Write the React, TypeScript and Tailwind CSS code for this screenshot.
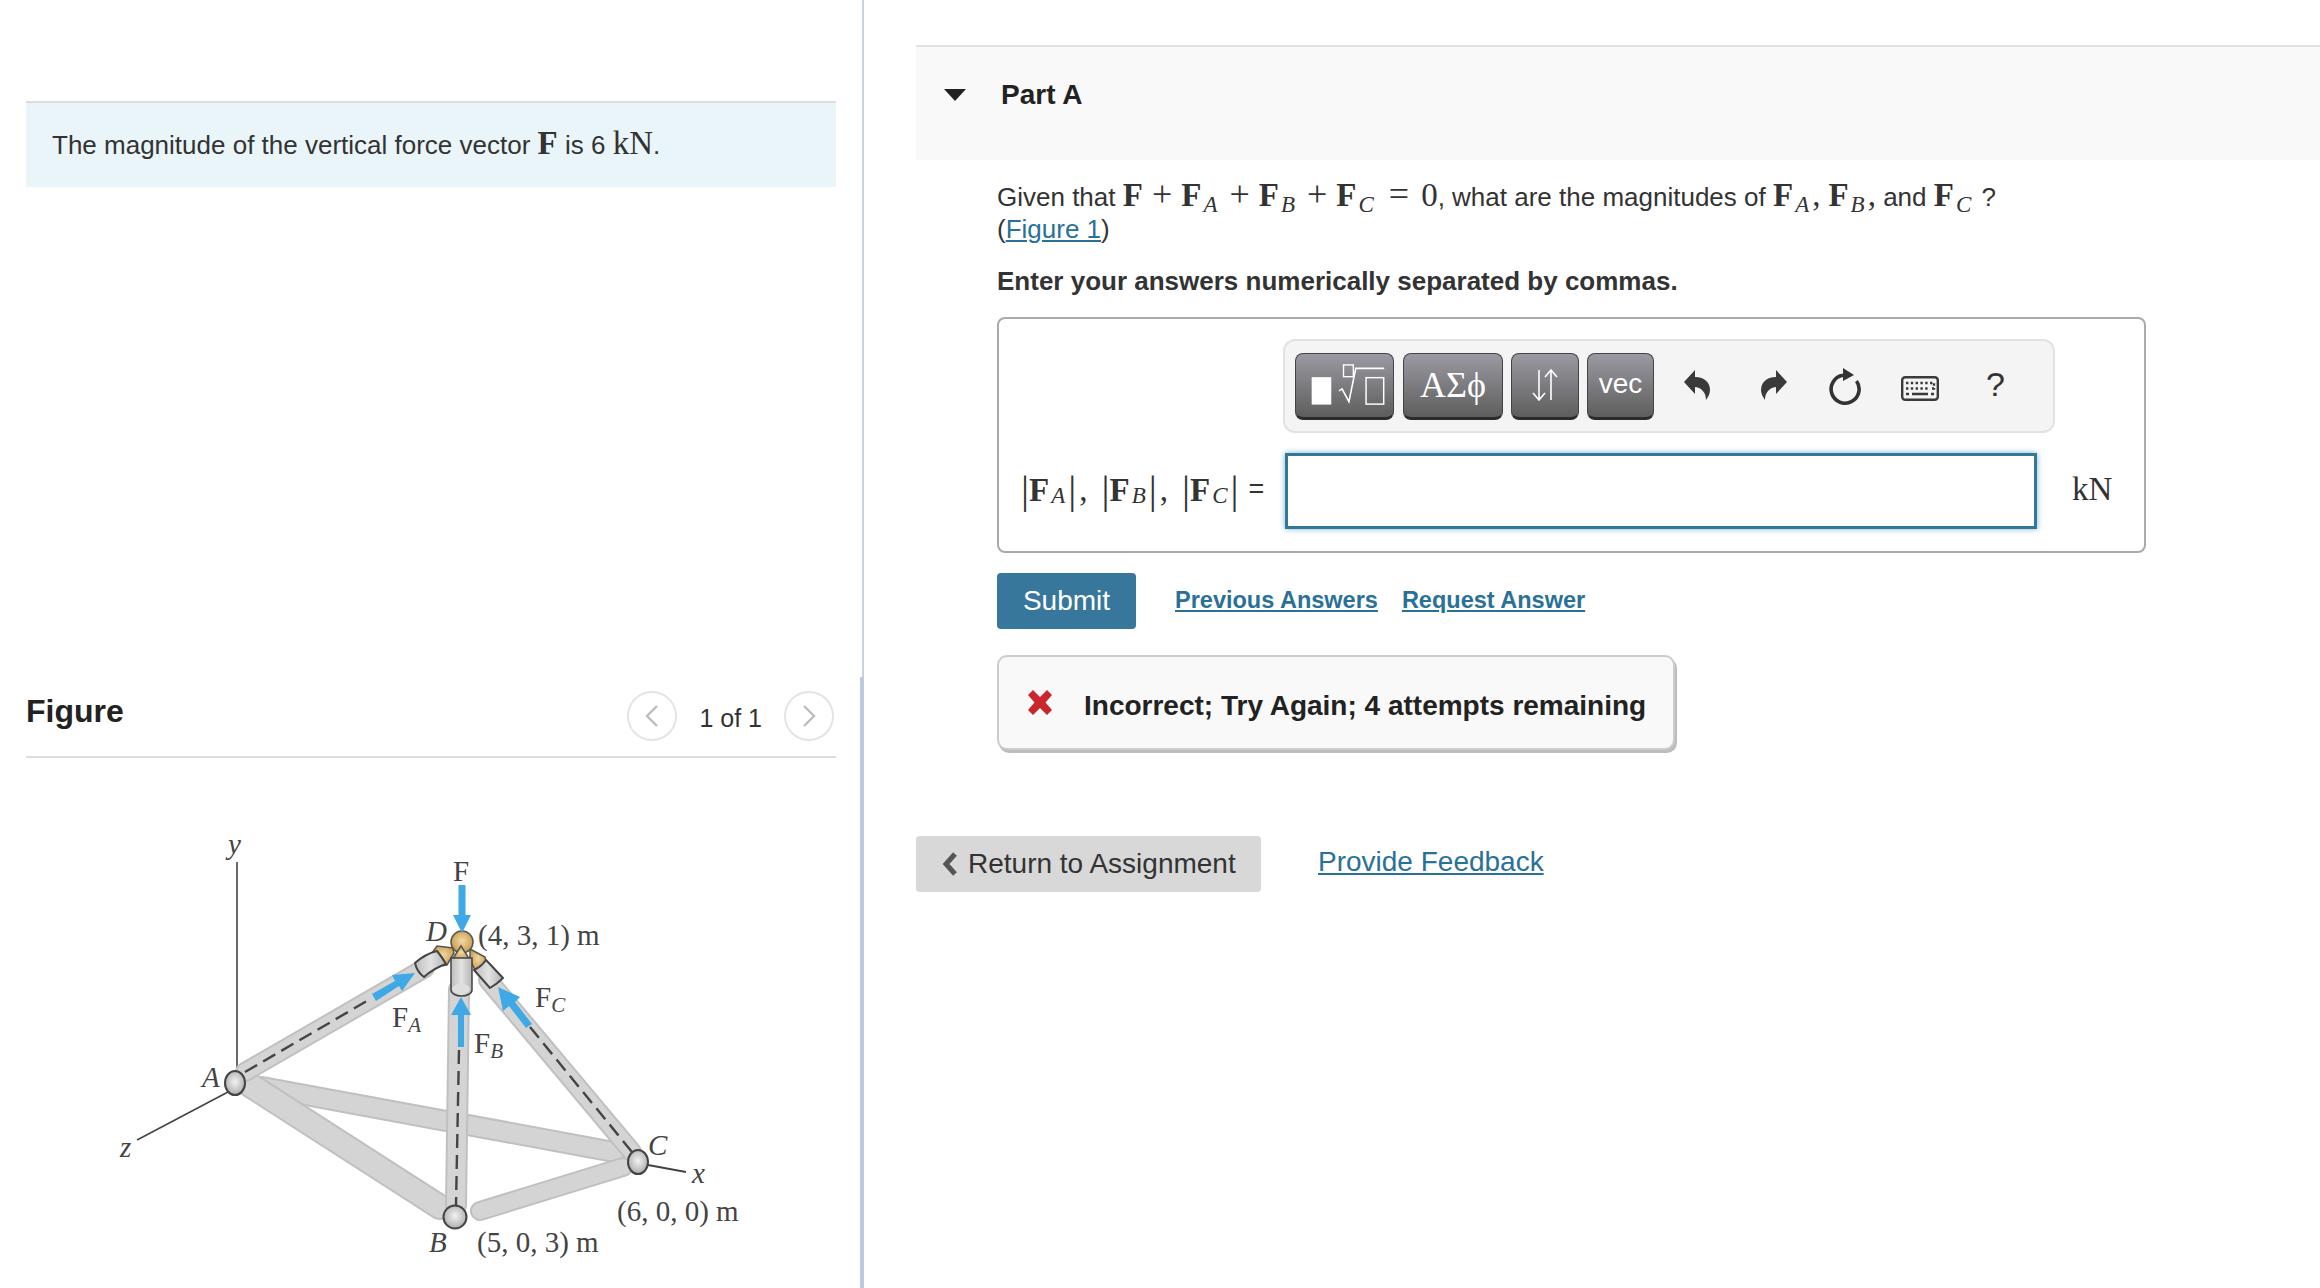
import type { ReactNode } from 'react'

const serif = 'font-["Liberation_Serif",serif]'

function MathBold({ children }: { children: ReactNode }) {
  return <span className={`${serif} font-bold text-[33px] leading-[0]`}>{children}</span>
}

function Sub({ children }: { children: ReactNode }) {
  return <span className={`${serif} relative top-[6px] ml-[2px] mr-[3px] italic font-normal text-[23px] leading-[0]`}>{children}</span>
}

function Op({ children, className = 'mx-[9px]' }: { children: ReactNode; className?: string }) {
  return <span className={`${serif} text-[36px] leading-[0] ${className}`}>{children}</span>
}

function Comma({ className = '' }: { className?: string }) {
  return <span className={`${serif} text-[33px] leading-[0] ${className}`}>,</span>
}

function Bar() {
  return <span className={`${serif} text-[40px] leading-none font-light`}>|</span>
}

function UndoIcon({ flip = false }: { flip?: boolean }) {
  return (
    <svg width="28" height="31" viewBox="0 0 28 31" className={flip ? '-scale-x-100' : ''}>
      <path d="M1 12 L12 0 V7 C22 7 27 13 27 20 C27 24 25 27 23 30 C23 24 20 18 12 17 V24 Z" fill="#3a3a3a" />
    </svg>
  )
}

function ResetIcon() {
  return (
    <svg width="34" height="37" viewBox="0 0 34 37">
      <path d="M15 7.3 A14 14 0 1 0 28.5 13" fill="none" stroke="#333" strokeWidth="3.6" />
      <path d="M15 0 L26 7 L15 13 Z" fill="#333" />
    </svg>
  )
}

function KeyboardIcon() {
  return (
    <svg width="38" height="25" viewBox="0 0 38 25">
      <rect x="1.2" y="1.2" width="35.6" height="22.6" rx="3" fill="#f4f4f4" stroke="#3a3a3a" strokeWidth="2.4" />
      <path d="M5 7 H33" stroke="#3a3a3a" strokeWidth="2.4" strokeDasharray="2.4 2.4" />
      <path d="M5 12.5 H29 M31 12.5 H33 V7" fill="none" stroke="#3a3a3a" strokeWidth="2.4" strokeDasharray="2.4 2.4" />
      <path d="M5 18 H8 M11 18 H27 M30 18 H33" stroke="#3a3a3a" strokeWidth="2.4" />
    </svg>
  )
}

const toolBtn =
  'h-[67px] flex items-center justify-center rounded-[8px] border border-[#444] border-b-[3px] border-b-[#2c2c2c] bg-linear-to-b from-[#9b9aa3] to-[#5e5e5e] text-white'

function Toolbar() {
  return (
    <div className="ml-[284px] w-[772px] h-[94px] flex items-center pl-[10px] rounded-[12px] border-2 border-[#e2e2e2] bg-[#f4f4f4]">
      <button className={`${toolBtn} w-[99px]`}>
        <svg width="99" height="67" viewBox="0 0 99 67">
          <rect x="16" y="25" width="20" height="28" fill="#fff" />
          <rect x="48.5" y="12.5" width="10" height="12" fill="none" stroke="#fff" strokeWidth="1.4" />
          <path d="M44 39 L47 37 L54 50 L61 16 H90" fill="none" stroke="#fff" strokeWidth="1.6" />
          <rect x="71.5" y="25.5" width="18" height="27" fill="none" stroke="#fff" strokeWidth="1.5" />
        </svg>
      </button>
      <button className={`${toolBtn} w-[100px] ml-[9px] ${serif} text-[36px]`}>ΑΣϕ</button>
      <button className={`${toolBtn} w-[68px] ml-[8px]`}>
        <svg width="30" height="36" viewBox="0 0 30 36" fill="none" stroke="#fff" strokeWidth="1.6">
          <path d="M9 3 V33 M3 26 L9 33 L15 26" />
          <path d="M21 33 V3 M15 10 L21 3 L27 10" />
        </svg>
      </button>
      <button className={`${toolBtn} w-[67px] ml-[8px] text-[28px] pb-[3px]`}>vec</button>
      <div className="ml-[29px] w-[77px] -mt-[2px]"><UndoIcon /></div>
      <div className="w-[68px] -mt-[2px]"><UndoIcon flip /></div>
      <div className="w-[73px]"><ResetIcon /></div>
      <div className="w-[85px] mt-[5px]"><KeyboardIcon /></div>
      <span className="text-[34px] text-[#333] -mt-[4px]">?</span>
    </div>
  )
}

function Strut({ x1, y1, x2, y2, w }: { x1: number; y1: number; x2: number; y2: number; w: number }) {
  return (
    <>
      <line x1={x1} y1={y1} x2={x2} y2={y2} stroke="#c0c0c0" strokeWidth={w} strokeLinecap="round" />
      <line x1={x1} y1={y1} x2={x2} y2={y2} stroke="#d4d4d4" strokeWidth={w - 4} strokeLinecap="round" />
    </>
  )
}

function Arrow({ points }: { points: string }) {
  return <polygon points={points} fill="#3fa9e5" />
}

function TrussFigure() {
  const label = { fontFamily: 'Liberation Serif, serif', fill: '#444' }
  return (
    <svg width="808" height="508" viewBox="26 780 808 508" className="block" style={label}>
      <defs>
        <radialGradient id="ball" cx="0.5" cy="0.45" r="0.6">
          <stop offset="0" stopColor="#f2f2f2" />
          <stop offset="1" stopColor="#a8a8a8" />
        </radialGradient>
        <radialGradient id="gold" cx="0.5" cy="0.45" r="0.6">
          <stop offset="0" stopColor="#f0d9a8" />
          <stop offset="1" stopColor="#c8963f" />
        </radialGradient>
        <linearGradient id="cyl" x1="0" x2="1" y1="0" y2="0">
          <stop offset="0" stopColor="#bdbdbd" />
          <stop offset="0.5" stopColor="#e2e2e2" />
          <stop offset="1" stopColor="#b4b4b4" />
        </linearGradient>
      </defs>

      <line x1="237" y1="862" x2="237" y2="1075" stroke="#444" strokeWidth="1.6" />
      <line x1="228" y1="1092" x2="137" y2="1140" stroke="#444" strokeWidth="1.6" />
      <line x1="648" y1="1165" x2="686" y2="1172" stroke="#444" strokeWidth="2" />

      <Strut x1={262} y1={1087} x2={614} y2={1152} w={22} />
      <Strut x1={250} y1={1085} x2={440} y2={1207} w={26} />
      <Strut x1={480} y1={1211} x2={623} y2={1167} w={20} />
      <Strut x1={245} y1={1072} x2={425} y2={968} w={20} />
      <Strut x1={488} y1={980} x2={632} y2={1152} w={20} />
      <Strut x1={459} y1={990} x2={456} y2={1205} w={22} />

      <line x1="245" y1="1072" x2="372" y2="998" stroke="#444" strokeWidth="2.4" strokeDasharray="14 7" />
      <line x1="530" y1="1027" x2="632" y2="1152" stroke="#444" strokeWidth="2.4" strokeDasharray="14 7" />
      <line x1="459" y1="1050" x2="456" y2="1205" stroke="#444" strokeWidth="2.4" strokeDasharray="14 7" />

      <path d="M432 953 L437 946 L453 948 L454 953 L447 965 L440 966 Z" fill="url(#gold)" stroke="#555" strokeWidth="1.5" />
      <path d="M470 949 L485 957 L486 962 L475 970 L470 960 Z" fill="url(#gold)" stroke="#555" strokeWidth="1.5" />
      <path d="M415 963 Q425 954 437 951 Q442 957 446 964 Q434 968 424 977 Q417 972 415 963 Z" fill="url(#cyl)" stroke="#444" strokeWidth="2" strokeLinejoin="round" />
      <path d="M474 970 Q481 967 486 960 L503 978 Q497 984 490 988 Z" fill="url(#cyl)" stroke="#444" strokeWidth="2" strokeLinejoin="round" />
      <circle cx="462" cy="942" r="11" fill="url(#gold)" stroke="#555" strokeWidth="1.5" />
      <path d="M452 960 L461 946 L470 960 Z" fill="url(#gold)" stroke="#555" strokeWidth="1.5" />
      <path d="M451 958 H472 V990 A10.5 6 0 0 1 451 990 Z" fill="url(#cyl)" stroke="#444" strokeWidth="1.5" />
      <ellipse cx="461" cy="989" rx="9" ry="5" fill="#dedede" />

      <Arrow points="458.5,885 465.5,885 465.5,915 471,915 462,933 453,915 458.5,915" />
      <Arrow points="372,994 395,981 392,975 415,973 402,991 399,986 376,1001" />
      <Arrow points="526,1028 509,1006 503,1011 498,987 520,997 515,1002 532,1024" />
      <Arrow points="458,1047 458,1015 451,1015 461,997 471,1015 464,1015 464,1047" />

      <ellipse cx="235" cy="1083" rx="10" ry="12" fill="url(#ball)" stroke="#444" strokeWidth="2" />
      <circle cx="455" cy="1217" r="11.5" fill="url(#ball)" stroke="#444" strokeWidth="2" />
      <ellipse cx="638" cy="1162" rx="10" ry="12" fill="url(#ball)" stroke="#444" strokeWidth="2" />

      <g fontSize="29">
        <text x="228" y="854" fontStyle="italic">y</text>
        <text x="453" y="881">F</text>
        <text x="426" y="941" fontStyle="italic">D</text>
        <text x="478" y="945">(4, 3, 1) m</text>
        <text x="535" y="1007">F<tspan fontSize="21" fontStyle="italic" dy="5">C</tspan></text>
        <text x="392" y="1027">F<tspan fontSize="21" fontStyle="italic" dy="5">A</tspan></text>
        <text x="474" y="1053">F<tspan fontSize="21" fontStyle="italic" dy="5">B</tspan></text>
        <text x="202" y="1087" fontStyle="italic">A</text>
        <text x="120" y="1157" fontStyle="italic">z</text>
        <text x="648" y="1155" fontStyle="italic">C</text>
        <text x="692" y="1183" fontStyle="italic">x</text>
        <text x="617" y="1221">(6, 0, 0) m</text>
        <text x="429" y="1252" fontStyle="italic">B</text>
        <text x="477" y="1252">(5, 0, 3) m</text>
      </g>
    </svg>
  )
}

export default function App() {
  return (
    <div className="relative flex h-[1288px] overflow-hidden bg-white font-['Liberation_Sans',sans-serif] text-[26px] text-[#333]">
      <div className="w-[864px] shrink-0 border-r-2 border-[#c9d3df] pt-[101px] pl-[26px] pr-[26px]">
        <div className="h-[86px] border-t-2 border-[#dddddd] bg-[#e9f5f8] flex items-center pl-[26px]">
          <span>
            The magnitude of the vertical force vector <MathBold>F</MathBold> is 6 <span className={`${serif} text-[33px] leading-[0]`}>kN</span>.
          </span>
        </div>

        <div className="mt-[501px] h-[70px] flex items-center justify-between border-b-2 border-[#dddddd] pb-[13px]">
          <span className="-mt-[10px] text-[32px] font-bold text-[#222]">Figure</span>
          <div className="flex items-center mr-[2px]">
            <button className="w-[50px] h-[50px] rounded-full border-2 border-[#e4e4e4] flex items-center justify-center">
              <svg width="16" height="24" viewBox="0 0 16 24" fill="none" stroke="#bdbdbd" strokeWidth="2.4"><path d="M13 2 L3 12 L13 22" /></svg>
            </button>
            <span className="mx-[22px] mt-[6px] text-[25px]">1 of 1</span>
            <button className="w-[50px] h-[50px] rounded-full border-2 border-[#e4e4e4] flex items-center justify-center">
              <svg width="16" height="24" viewBox="0 0 16 24" fill="none" stroke="#bdbdbd" strokeWidth="2.4"><path d="M3 2 L13 12 L3 22" /></svg>
            </button>
          </div>
        </div>

        <div className="mt-[22px]">
          <TrussFigure />
        </div>
      </div>

      {/* scrollbar thumb sitting over the divider */}
      <div className="absolute left-[860px] top-[677px] bottom-0 w-[4px] bg-[#bccbe0]" />

      <div className="flex-1 pl-[52px] pt-[45px]">
        <div className="h-[115px] border-t-2 border-[#e2e2e2] bg-[#f9f9f9] flex items-center pb-[18px]">
          <svg width="22" height="12" viewBox="0 0 22 12" className="ml-[28px]"><path d="M0 0 H22 L11 12 Z" fill="#222" /></svg>
          <h2 className="ml-[35px] text-[28px] font-bold text-[#222]">Part A</h2>
        </div>

        <div className="pl-[81px]">
          <p className="mt-[21px] leading-[32px]">
            Given that <MathBold>F</MathBold><Op>+</Op><MathBold>F</MathBold><Sub>A</Sub><Op>+</Op><MathBold>F</MathBold><Sub>B</Sub><Op>+</Op><MathBold>F</MathBold><Sub>C</Sub><Op className="mx-[12px]">=</Op><span className={`${serif} text-[33px] leading-[0]`}>0</span>, what are the magnitudes of <MathBold>F</MathBold><Sub>A</Sub><Comma className="mr-[8px]" /><MathBold>F</MathBold><Sub>B</Sub><Comma /> and <MathBold>F</MathBold><Sub>C</Sub> ?
            <br />
            (<a className="text-[#2a7199] underline">Figure 1</a>)
          </p>
          <p className="mt-[20px] leading-[32px] font-bold">Enter your answers numerically separated by commas.</p>

          <div className="mt-[20px] w-[1149px] h-[236px] rounded-[8px] border-2 border-[#aaaaaa] pt-[20px]">
            <Toolbar />
            <div className="mt-[20px] flex items-center">
              <div className="w-[286px] pl-[22px] -mt-[3px] flex items-center whitespace-nowrap">
                <Bar /><MathBold>F</MathBold><Sub>A</Sub><Bar /><Comma className="ml-[3px] mr-[14px]" />
                <Bar /><MathBold>F</MathBold><Sub>B</Sub><Bar /><Comma className="ml-[3px] mr-[14px]" />
                <Bar /><MathBold>F</MathBold><Sub>C</Sub><Bar />
                <span className="ml-[10px] text-[27px]">=</span>
              </div>
              <input className="w-[752px] h-[76px] border-[3px] border-[#337899] bg-white outline-none shadow-[0_0_6px_#7fb2cc]" />
              <span className={`ml-[35px] -mt-[3px] ${serif} text-[33px]`}>kN</span>
            </div>
          </div>

          <div className="mt-[20px] flex items-center">
            <button className="w-[139px] h-[56px] rounded-[4px] bg-[#37779b] text-[28px] text-white">Submit</button>
            <a className="ml-[39px] text-[23.5px] font-bold text-[#2a7199] underline">Previous Answers</a>
            <a className="ml-[24px] text-[23.5px] font-bold text-[#2a7199] underline">Request Answer</a>
          </div>

          <div className="mt-[26px] w-[678px] h-[95px] flex items-center rounded-[10px] border-2 border-[#cccccc] bg-[#f9f9f9] shadow-[2px_3px_0_#bdbdbd] pl-[27px]">
            <svg width="28" height="27" viewBox="0 0 28 27">
              <path d="M2 6 L7 1 L14 8 L21 1 L26 6 L19.5 13.5 L26 21 L21 26 L14 19 L7 26 L2 21 L8.5 13.5 Z" fill="#c9272b" />
            </svg>
            <span className="ml-[30px] mt-[7px] text-[28px] font-bold text-[#222]">Incorrect; Try Again; 4 attempts remaining</span>
          </div>

          <div className="-ml-[81px] mt-[86px] flex items-center">
            <button className="w-[345px] h-[56px] rounded-[4px] bg-[#d8d8d8] flex items-center pl-[26px] text-[28px] text-[#333]">
              <svg width="16" height="24" viewBox="0 0 16 24" fill="none" stroke="#555" strokeWidth="5"><path d="M13 2 L4 12 L13 22" /></svg>
              <span className="ml-[10px]">Return to Assignment</span>
            </button>
            <a className="ml-[57px] -mt-[4px] text-[28px] text-[#2a7199] underline">Provide Feedback</a>
          </div>
        </div>
      </div>
    </div>
  )
}
